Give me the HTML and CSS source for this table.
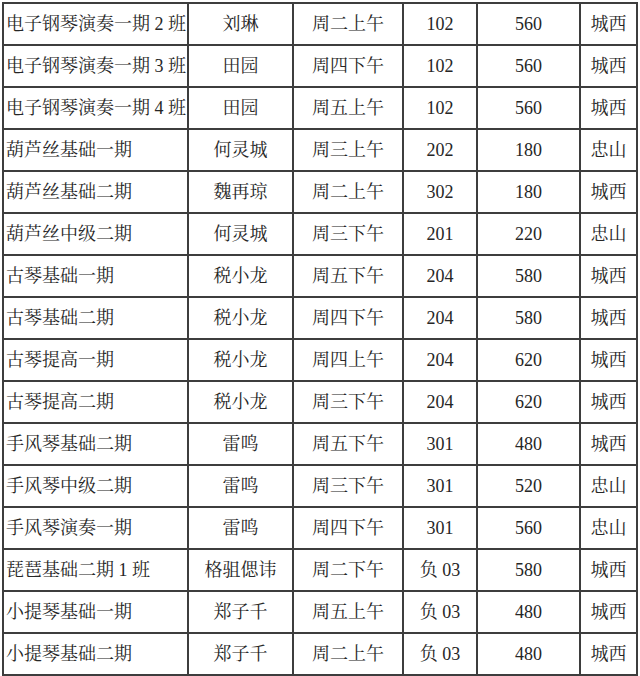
FILE: index.html
```html
<!DOCTYPE html>
<html lang="zh">
<head>
<meta charset="utf-8">
<link rel="stylesheet" href="styles.css">
</head>
<body>
<table class="sched">
<colgroup>
<col class="c-name"><col class="c-teacher"><col class="c-time"><col class="c-room"><col class="c-fee"><col class="c-area">
</colgroup>
<tbody>
<tr><td class="name">电子钢琴演奏一期 2 班</td><td>刘琳</td><td>周二上午</td><td>102</td><td>560</td><td>城西</td></tr>
<tr><td class="name">电子钢琴演奏一期 3 班</td><td>田园</td><td>周四下午</td><td>102</td><td>560</td><td>城西</td></tr>
<tr><td class="name">电子钢琴演奏一期 4 班</td><td>田园</td><td>周五上午</td><td>102</td><td>560</td><td>城西</td></tr>
<tr><td class="name">葫芦丝基础一期</td><td>何灵城</td><td>周三上午</td><td>202</td><td>180</td><td>忠山</td></tr>
<tr><td class="name">葫芦丝基础二期</td><td>魏再琼</td><td>周二上午</td><td>302</td><td>180</td><td>城西</td></tr>
<tr><td class="name">葫芦丝中级二期</td><td>何灵城</td><td>周三下午</td><td>201</td><td>220</td><td>忠山</td></tr>
<tr><td class="name">古琴基础一期</td><td>税小龙</td><td>周五下午</td><td>204</td><td>580</td><td>城西</td></tr>
<tr><td class="name">古琴基础二期</td><td>税小龙</td><td>周四下午</td><td>204</td><td>580</td><td>城西</td></tr>
<tr><td class="name">古琴提高一期</td><td>税小龙</td><td>周四上午</td><td>204</td><td>620</td><td>城西</td></tr>
<tr><td class="name">古琴提高二期</td><td>税小龙</td><td>周三下午</td><td>204</td><td>620</td><td>城西</td></tr>
<tr><td class="name">手风琴基础二期</td><td>雷鸣</td><td>周五下午</td><td>301</td><td>480</td><td>城西</td></tr>
<tr><td class="name">手风琴中级二期</td><td>雷鸣</td><td>周三下午</td><td>301</td><td>520</td><td>忠山</td></tr>
<tr><td class="name">手风琴演奏一期</td><td>雷鸣</td><td>周四下午</td><td>301</td><td>560</td><td>忠山</td></tr>
<tr><td class="name">琵琶基础二期 1 班</td><td>格驵偲讳</td><td>周二下午</td><td>负 03</td><td>580</td><td>城西</td></tr>
<tr><td class="name">小提琴基础一期</td><td>郑子千</td><td>周五上午</td><td>负 03</td><td>480</td><td>城西</td></tr>
<tr><td class="name">小提琴基础二期</td><td>郑子千</td><td>周二上午</td><td>负 03</td><td>480</td><td>城西</td></tr>
</tbody>
</table>
</body>
</html>
```
FILE: styles.css
```css
html, body {
  margin: 0;
  padding: 0;
  background: #ffffff;
}
body {
  padding: 2px 0 0 2px;
  font-family: "Liberation Serif", "Noto Serif CJK SC", "Noto Sans CJK SC", serif;
  color: #262626;
}
.sched {
  border-collapse: collapse;
  table-layout: fixed;
  width: 634px;
}
.c-name { width: 185px; }
.c-teacher { width: 105px; }
.c-time { width: 110px; }
.c-room { width: 74px; }
.c-fee { width: 103px; }
.c-area { width: 57px; }
.sched td {
  border: 2px solid #3d3d3d;
  height: 40px;
  padding: 0;
  text-align: center;
  vertical-align: middle;
  font-size: 18px;
  line-height: 20px;
  white-space: nowrap;
}
.sched td.name {
  text-align: left;
  padding-left: 2px;
}
```
